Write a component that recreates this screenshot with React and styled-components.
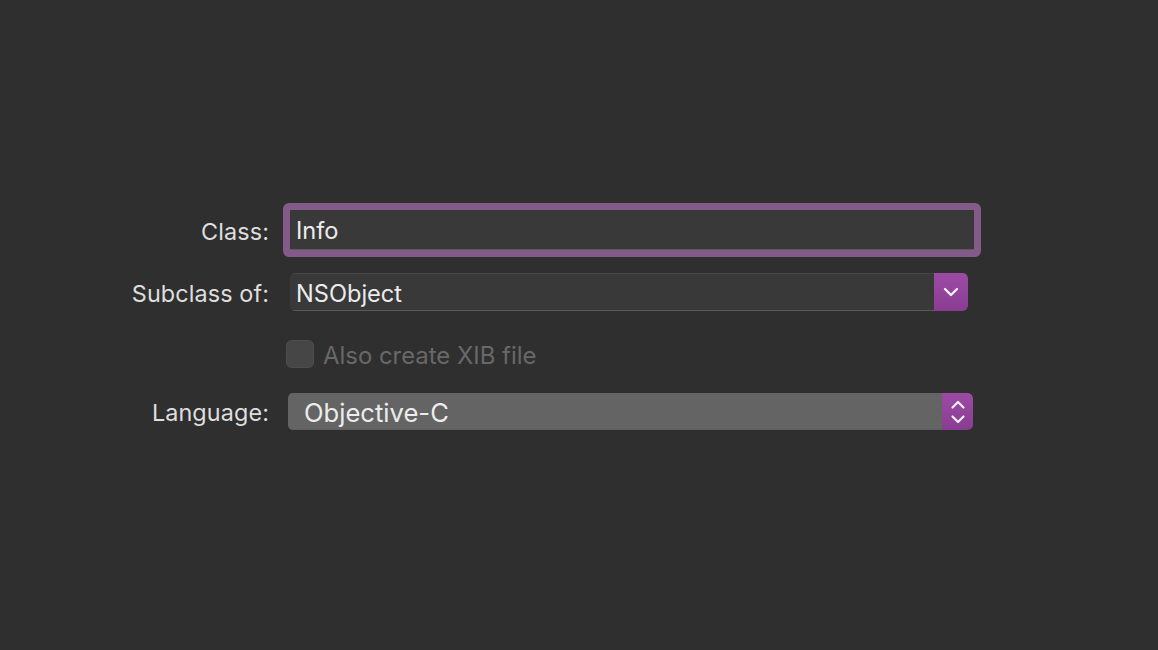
import React from "react";
import styled, { createGlobalStyle } from "styled-components";

const Global = createGlobalStyle`
  html, body { margin: 0; padding: 0; background: #2f2f2f; }
  body { font-family: Inter, "Noto Sans", "Liberation Sans", sans-serif; }
`;

const Page = styled.div`
  width: 1158px;
  height: 650px;
  background: #2f2f2f;
  box-sizing: border-box;
  padding-top: 203px;
`;

const Row = styled.div`
  display: flex;
  align-items: center;
  height: ${(p) => p.$h}px;
  margin-top: ${(p) => p.$mt || 0}px;
`;

const Label = styled.div`
  width: 269px;
  text-align: right;
  color: #dedede;
  font-size: 23.4px;
  letter-spacing: 0.1px;
  flex-shrink: 0;
  padding-top: 2px;
`;

const Slot = styled.div`
  display: flex;
  align-items: center;
  margin-left: ${(p) => p.$ml}px;
`;

const FocusRing = styled.div`
  width: 698px;
  height: 54px;
  box-sizing: border-box;
  padding: 7px;
  background: #845a88;
  border-radius: 6px;
`;

const TextField = styled.div`
  height: 40px;
  background: #393939;
  box-sizing: border-box;
  border-bottom: 1px solid #5c5c5c;
  display: flex;
  align-items: center;
  padding: 2px 0 0 6px;
  color: #ececec;
  font-size: 23.6px;
`;

const Popup = styled.div`
  display: flex;
  width: ${(p) => p.$w}px;
  height: ${(p) => p.$h}px;
  border-radius: 5px;
  overflow: hidden;
  box-sizing: border-box;
`;

const PopupValue = styled.div`
  flex: 1;
  display: flex;
  align-items: center;
  padding-left: ${(p) => p.$pl}px;
  padding-top: 2px;
  color: #ececec;
  font-size: ${(p) => p.$fs}px;
  background: ${(p) => p.$bg};
  border-top: 1px solid ${(p) => p.$top};
  border-bottom: 1px solid ${(p) => p.$bottom};
  box-sizing: border-box;
`;

const PopupButton = styled.div`
  width: ${(p) => p.$w}px;
  background: linear-gradient(#9c4ba5, #893d92);
  display: flex;
  align-items: center;
  justify-content: center;
  border-radius: 0 5px 5px 0;
`;

const Check = styled.div`
  width: 28px;
  height: 28px;
  border-radius: 6px;
  background: #464646;
  box-shadow: inset 0 0 0 1px #4c4c4c;
`;

const CheckLabel = styled.span`
  margin-left: 9px;
  padding-top: 2px;
  color: #686868;
  font-size: 23.9px;
`;

const ChevronDown = () => (
  <svg width="16" height="10" viewBox="0 0 16 10">
    <path d="M2 2 L8 8 L14 2" fill="none" stroke="#f4eef5" strokeWidth="2.4" strokeLinecap="round" strokeLinejoin="round" />
  </svg>
);

const UpDown = () => (
  <svg width="16" height="28" viewBox="0 0 16 28">
    <path d="M2.5 9.5 L8 4 L13.5 9.5" fill="none" stroke="#f4eef5" strokeWidth="2.2" strokeLinecap="round" strokeLinejoin="round" />
    <path d="M2.5 18.5 L8 24 L13.5 18.5" fill="none" stroke="#f4eef5" strokeWidth="2.2" strokeLinecap="round" strokeLinejoin="round" />
  </svg>
);

export default function App() {
  return (
    <>
      <Global />
      <Page>
        <Row $h={54}>
          <Label>Class:</Label>
          <Slot $ml={14}>
            <FocusRing>
              <TextField>Info</TextField>
            </FocusRing>
          </Slot>
        </Row>
        <Row $h={38} $mt={16}>
          <Label>Subclass of:</Label>
          <Slot $ml={21}>
            <Popup $w={678} $h={38}>
              <PopupValue $pl={6} $fs={23.6} $bg="#393939" $top="#474747" $bottom="#5a5a5a">NSObject</PopupValue>
              <PopupButton $w={34}>
                <ChevronDown />
              </PopupButton>
            </Popup>
          </Slot>
        </Row>
        <Row $h={28} $mt={29}>
          <Label />
          <Slot $ml={17}>
            <Check />
            <CheckLabel>Also create XIB file</CheckLabel>
          </Slot>
        </Row>
        <Row $h={37} $mt={25}>
          <Label>Language:</Label>
          <Slot $ml={19}>
            <Popup $w={685} $h={37}>
              <PopupValue $pl={16} $fs={25.6} $bg="#646464" $top="#646464" $bottom="#5e5e5e">Objective-C</PopupValue>
              <PopupButton $w={31}>
                <UpDown />
              </PopupButton>
            </Popup>
          </Slot>
        </Row>
      </Page>
    </>
  );
}
